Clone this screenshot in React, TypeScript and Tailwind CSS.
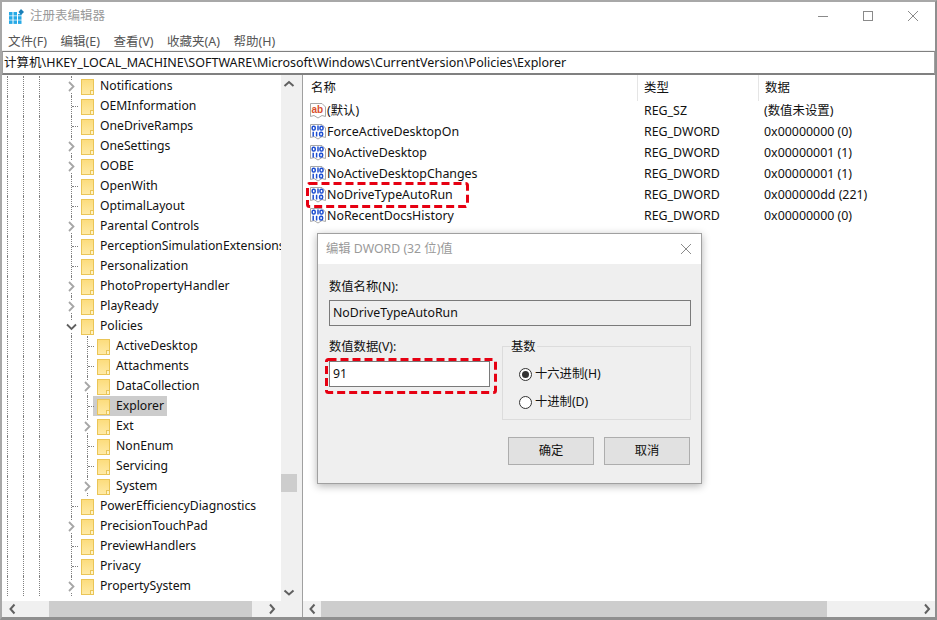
const F = "font-['Noto_Sans','Noto_Sans_CJK_SC',sans-serif]";

function Folder() {
  return (
    <svg width="13" height="16" viewBox="0 0 13 16" className="shrink-0">
      <defs>
        <linearGradient id="fg" x1="0" y1="0" x2="0" y2="1">
          <stop offset="0" stopColor="#fcdc7c" />
          <stop offset="1" stopColor="#ffeaa6" />
        </linearGradient>
      </defs>
      <rect x="0.5" y="0.5" width="12" height="15" fill="url(#fg)" stroke="#eac557" />
      <rect x="9.5" y="11.5" width="3" height="4" fill="#fff3c4" stroke="#eac557" />
    </svg>
  );
}

function Chevron({ open }: { open?: boolean }) {
  return (
    <svg width="11" height="11" viewBox="0 0 11 11" className="shrink-0">
      {open ? (
        <path d="M1 3.5 L5.5 8 L10 3.5" fill="none" stroke="#606060" strokeWidth="1.8" />
      ) : (
        <path d="M3 1 L7.5 5.5 L3 10" fill="none" stroke="#a6a6a6" strokeWidth="1.8" />
      )}
    </svg>
  );
}

type T = { n: string; k: 'c' | 'd' | 'o'; child?: boolean; last?: boolean; sel?: boolean };
const tree: T[] = [
  { n: 'Notifications', k: 'c' },
  { n: 'OEMInformation', k: 'd' },
  { n: 'OneDriveRamps', k: 'd' },
  { n: 'OneSettings', k: 'c' },
  { n: 'OOBE', k: 'c' },
  { n: 'OpenWith', k: 'd' },
  { n: 'OptimalLayout', k: 'd' },
  { n: 'Parental Controls', k: 'c' },
  { n: 'PerceptionSimulationExtensions', k: 'd' },
  { n: 'Personalization', k: 'd' },
  { n: 'PhotoPropertyHandler', k: 'c' },
  { n: 'PlayReady', k: 'c' },
  { n: 'Policies', k: 'o' },
  { n: 'ActiveDesktop', k: 'd', child: true },
  { n: 'Attachments', k: 'd', child: true },
  { n: 'DataCollection', k: 'c', child: true },
  { n: 'Explorer', k: 'd', child: true, sel: true },
  { n: 'Ext', k: 'c', child: true },
  { n: 'NonEnum', k: 'd', child: true },
  { n: 'Servicing', k: 'd', child: true },
  { n: 'System', k: 'c', child: true, last: true },
  { n: 'PowerEfficiencyDiagnostics', k: 'd' },
  { n: 'PrecisionTouchPad', k: 'c' },
  { n: 'PreviewHandlers', k: 'd' },
  { n: 'Privacy', k: 'd' },
  { n: 'PropertySystem', k: 'c' },
];

function Guide({ on }: { on?: boolean }) {
  return <div className={`w-4 h-full shrink-0 ${on ? 'border-l border-dotted border-[#808080]' : ''}`} />;
}

function Expander({ k }: { k: T['k'] }) {
  return (
    <div className="relative w-4 h-full shrink-0 flex items-center">
      <div className="w-[1px] h-full border-l border-dotted border-[#808080]" />
      {k === 'd' ? (
        <div className="w-[6px] border-t border-dotted border-[#808080]" />
      ) : (
        <div className="absolute left-[-5px] top-[5px] bg-white">
          <Chevron open={k === 'o'} />
        </div>
      )}
    </div>
  );
}

function TreeRow({ t }: { t: T }) {
  return (
    <div className="flex items-center h-5 pl-[5px] shrink-0">
      <Guide on />
      <Guide on />
      <Guide on />
      <Guide />
      {t.child && <Guide on />}
      <Expander k={t.k} />
      <div className={`flex items-center h-full ml-[-10px] pl-[4px] pr-[3px] ${t.sel ? 'bg-[#cccccc]' : ''}`}>
        <div className="mt-px"><Folder /></div>
        <span className="ml-[6px] text-[12.2px] leading-none whitespace-nowrap text-[#111]">{t.n}</span>
      </div>
    </div>
  );
}

function ArrowU({ d }: { d: 'u' | 'd' | 'l' | 'r' }) {
  const p = { u: 'M1.5 7 L6 3 L10.5 7', d: 'M1.5 3.5 L6 7.5 L10.5 3.5', l: 'M7.5 1.5 L3.5 6 L7.5 10.5', r: 'M4 1.5 L8 6 L4 10.5' }[d];
  return (
    <svg width="12" height="12" viewBox="0 0 12 12" className="shrink-0">
      <path d={p} fill="none" stroke="#606060" strokeWidth="2" />
    </svg>
  );
}

function AbIcon() {
  return (
    <svg width="16" height="16" viewBox="0 0 16 16" className="shrink-0">
      <path d="M0.5 0.5 H12 L15.5 4 V13.5 L12 12.5 L8 15 L4 12.5 L0.5 13.5 Z" fill="#fff" stroke="#a8a8a8" />
      <text x="1.5" y="10" fontSize="10" fontWeight="700" fontFamily="Liberation Sans" fill="#d9502e">ab</text>
    </svg>
  );
}

function BinIcon() {
  return (
    <svg width="16" height="16" viewBox="0 0 16 16" className="shrink-0">
      <path d="M0.5 0.5 H12 L15.5 4 V13.5 L12 12.5 L8 15 L4 12.5 L0.5 13.5 Z" fill="#fff" stroke="#a8a8a8" />
      <g fill="none" stroke="#1d4ed0" strokeWidth="1.5">
        <rect x="2.2" y="2.2" width="3" height="3.8" rx="1.3" />
        <path d="M8 1.5 V6.6" />
        <rect x="10" y="2.2" width="3" height="3.8" rx="1.3" />
        <path d="M3.2 7.8 V12.5" />
        <path d="M6.6 7.8 V12.5" />
        <rect x="9.6" y="8.2" width="3" height="3.8" rx="1.3" />
      </g>
    </svg>
  );
}

const values = [
  { n: '(默认)', t: 'REG_SZ', d: '(数值未设置)', ab: true },
  { n: 'ForceActiveDesktopOn', t: 'REG_DWORD', d: '0x00000000 (0)' },
  { n: 'NoActiveDesktop', t: 'REG_DWORD', d: '0x00000001 (1)' },
  { n: 'NoActiveDesktopChanges', t: 'REG_DWORD', d: '0x00000001 (1)' },
  { n: 'NoDriveTypeAutoRun', t: 'REG_DWORD', d: '0x000000dd (221)' },
  { n: 'NoRecentDocsHistory', t: 'REG_DWORD', d: '0x00000000 (0)' },
];

function Dash({ w, h, className }: { w: number; h: number; className: string }) {
  return (
    <svg width={w} height={h} className={`absolute ${className}`}>
      <rect x="1.5" y="1.5" width={w - 3} height={h - 3} rx="2" fill="none" stroke="#e60012" strokeWidth="3" strokeDasharray="8 4" />
    </svg>
  );
}

function Radio({ on, label }: { on?: boolean; label: string }) {
  return (
    <div className="flex items-center h-4">
      <div className="w-[13px] h-[13px] rounded-full border border-[#333] bg-white flex items-center justify-center">
        {on && <div className="w-[7px] h-[7px] rounded-full bg-[#333]" />}
      </div>
      <span className="ml-[3px]">{label}</span>
    </div>
  );
}

function Dialog() {
  return (
    <div className="absolute left-[315px] top-[231px] w-[385px] h-[251px] border border-[#a0a0a0] bg-[#efefef] shadow-[0_2px_8px_rgba(0,0,0,0.3)] flex flex-col text-[12.3px] text-[#111]">
      <div className="h-[30px] bg-white flex items-center justify-between pl-2 pr-[10px] shrink-0">
        <span className="text-[#9a9a9a]">编辑 DWORD (32 位)值</span>
        <svg width="10" height="10" viewBox="0 0 10 10"><path d="M0 0 L10 10 M10 0 L0 10" stroke="#8a8a8a" /></svg>
      </div>
      <div className="flex-1 flex flex-col pl-[11px] pr-[10px]">
        <div className="mt-[14px] h-[18px] flex items-center">数值名称(N):</div>
        <div className="mt-[4px] h-[26px] border border-[#7a7a7a] bg-[#efefef] flex items-center pl-[3px]">NoDriveTypeAutoRun</div>
        <div className="flex mt-[11px]">
          <div className="w-[161px] shrink-0">
            <div className="h-[18px] flex items-center mt-px">数值数据(V):</div>
            <div className="mt-[5px] h-[26px] border border-[#7a7a7a] bg-white flex items-center pl-[3px]">91</div>
          </div>
          <div className="relative ml-[12px] flex-1 h-[74px] mt-[9px] border border-[#dcdcdc] flex flex-col pl-4 pt-[19px] gap-[12px]">
            <span className="absolute left-[7px] top-[-8px] bg-[#efefef] px-px leading-4">基数</span>
            <Radio on label="十六进制(H)" />
            <Radio label="十进制(D)" />
          </div>
        </div>
        <div className="flex justify-end gap-[10px] mt-[17px] pr-px">
          <div className="w-[86px] h-[28px] border border-[#adadad] bg-[#e1e1e1] flex items-center justify-center">确定</div>
          <div className="w-[86px] h-[28px] border border-[#adadad] bg-[#e1e1e1] flex items-center justify-center">取消</div>
        </div>
      </div>
      <Dash w={172} h={36} className="left-[7px] top-[124px]" />
    </div>
  );
}

export default function App() {
  return (
    <div className={`${F} relative w-[937px] h-[620px] bg-[#f0f0f0] overflow-hidden border-2 border-b-[3px] border-[#a8a8a8] border-b-[#8f8f8f] border-r-[#8f8f8f] flex flex-col`}>
      <div className="h-[28px] bg-white flex items-center pl-[7px] shrink-0">
        <svg width="15" height="15" viewBox="0 0 15 15" className="shrink-0">
          <g fill="#27a9e6">
            <rect x="0" y="3" width="3.5" height="3.5" /><rect x="4.5" y="3" width="3.5" height="3.5" /><rect x="9" y="5" width="3.5" height="1.5" />
            <rect x="0" y="7.2" width="3.5" height="3.5" /><rect x="4.5" y="7.2" width="3.5" height="3.5" /><rect x="9" y="7.2" width="3.5" height="3.5" />
            <rect x="0" y="11.4" width="3.5" height="3.5" /><rect x="4.5" y="11.4" width="3.5" height="3.5" /><rect x="9" y="11.4" width="3.5" height="3.5" />
          </g>
          <path d="M12 0 L15 3 L12 6 L9.5 3 Z" fill="#1a7fb8" />
        </svg>
        <span className="ml-[6px] text-[12.5px] text-[#9a9a9a]">注册表编辑器</span>
        <div className="ml-auto flex items-center pr-[17px] gap-[35px]">
          <div className="w-[10px] h-px bg-[#8a8a8a]" />
          <div className="w-[10px] h-[10px] border border-[#8a8a8a]" />
          <svg width="10" height="10" viewBox="0 0 10 10"><path d="M0 0 L10 10 M10 0 L0 10" stroke="#8a8a8a" /></svg>
        </div>
      </div>
      <div className="h-[20px] bg-white flex items-center pl-[6px] pt-[4px] gap-[13.5px] text-[12.5px] text-[#555] shrink-0">
        <span>文件(F)</span><span>编辑(E)</span><span>查看(V)</span><span>收藏夹(A)</span><span>帮助(H)</span>
      </div>
      <div className="h-[24px] border border-b-2 border-[#a0a0a0] border-t-[#808080] border-b-[#808080] bg-white flex items-center pl-[1px] pt-[2px] text-[12.5px] text-[#111] shrink-0 mt-px">
        计算机\HKEY_LOCAL_MACHINE\SOFTWARE\Microsoft\Windows\CurrentVersion\Policies\Explorer
      </div>
      <div className="flex-1 flex min-h-0">
        <div className="w-[295px] bg-white flex flex-col shrink-0">
          <div className="flex-1 flex min-h-0">
            <div className="flex-1 min-w-0 overflow-hidden flex flex-col pt-px">
              {tree.map((t) => <TreeRow key={t.n} t={t} />)}
            </div>
            <div className="w-[16px] bg-[#f0f0f0] flex flex-col items-center shrink-0">
              <div className="h-[19px] flex items-center"><ArrowU d="u" /></div>
              <div className="h-[380px]" />
              <div className="w-full h-[18px] bg-[#cdcdcd]" />
              <div className="flex-1" />
              <div className="h-[17px] flex items-center"><ArrowU d="d" /></div>
            </div>
          </div>
          <div className="h-[16px] bg-[#f0f0f0] flex items-center shrink-0 pl-[5px]">
            <ArrowU d="l" />
            <div className="ml-[30px] w-[203px] h-full bg-[#cdcdcd]" />
            <div className="ml-[14px]"><ArrowU d="r" /></div>
          </div>
        </div>
        <div className="w-[6px] bg-[#f0f0f0] border-r border-[#a0a0a0] shrink-0" />
        <div className="flex-1 bg-white flex flex-col min-w-0">
          <div className="flex-1 flex flex-col text-[12.4px] text-[#111]">
            <div className="h-[26px] flex items-center shrink-0 pl-[8px]">
              <div className="w-[327px] h-full flex items-center border-r border-[#e5e5e5]">名称</div>
              <div className="w-[121px] h-full flex items-center pl-[6px] border-r border-[#e5e5e5]">类型</div>
              <div className="pl-[6px]">数据</div>
            </div>
            {values.map((v) => (
              <div key={v.n} className="h-[21px] flex items-center shrink-0 pl-[7px]">
                <div className="w-[328px] flex items-center gap-px">
                  {v.ab ? <AbIcon /> : <BinIcon />}
                  <span className="whitespace-nowrap">{v.n}</span>
                </div>
                <div className="w-[121px] pl-[6px]">{v.t}</div>
                <div className="pl-[5px]">{v.d}</div>
              </div>
            ))}
          </div>
          <div className="h-[16px] bg-[#f0f0f0] flex items-center shrink-0 pl-[4px] pr-[2px]">
            <ArrowU d="l" />
            <div className="ml-[2px] flex-1 h-full bg-[#cdcdcd] mr-[94px]" />
            <ArrowU d="r" />
          </div>
        </div>
      </div>
      <Dash w={163} h={26} className="left-[304px] top-[180px]" />
      <Dialog />
    </div>
  );
}
